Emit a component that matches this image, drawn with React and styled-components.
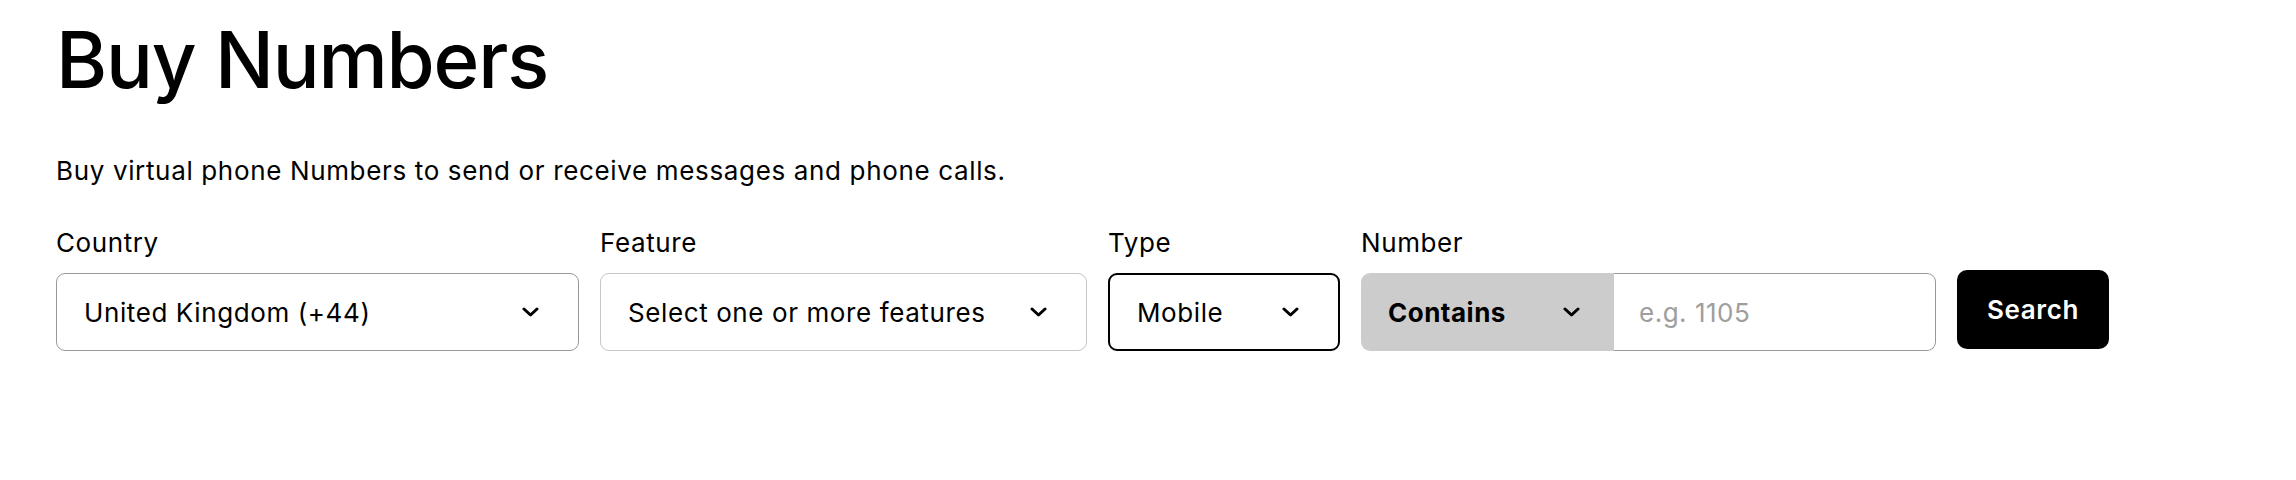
import styled, { createGlobalStyle } from "styled-components";

const GlobalStyle = createGlobalStyle`
  body {
    margin: 0;
    background: #fff;
    font-family: Inter, "Noto Sans", sans-serif;
    color: #000;
  }
`;

const Page = styled.div`
  padding: 12px 56px 0 56px;
`;

const Title = styled.h1`
  margin: 0;
  font-size: 78px;
  font-weight: 500;
  letter-spacing: -1.2px;
  line-height: 96px;
`;

const Description = styled.p`
  margin: 45px 0 0 0;
  font-size: 26px;
  letter-spacing: 0.65px;
  line-height: 36px;
`;

const Form = styled.div`
  display: flex;
  align-items: flex-end;
  gap: 21px;
  margin-top: 36px;
`;

const Field = styled.div`
  display: flex;
  flex-direction: column;
  width: ${(p) => p.width}px;
`;

const Label = styled.label`
  font-size: 26px;
  letter-spacing: 0.6px;
  line-height: 36px;
  margin-bottom: 12px;
`;

const Select = styled.div`
  box-sizing: border-box;
  height: 78px;
  display: flex;
  align-items: center;
  justify-content: space-between;
  padding: 0 39px 0 27px;
  border: ${(p) => (p.strong ? "2px solid #000" : `1.5px solid ${p.border || "#999"}`)};
  border-radius: 9px;
  font-size: 26px;
  letter-spacing: 0.6px;
  background: #fff;
`;

const Group = styled.div`
  display: flex;
  height: 78px;
`;

const Prefix = styled.div`
  box-sizing: border-box;
  width: 253px;
  display: flex;
  align-items: center;
  justify-content: space-between;
  padding: 0 34px 0 27px;
  background: #cccccc;
  border-radius: 9px 0 0 9px;
  font-size: 26px;
  font-weight: 700;
  letter-spacing: 0.5px;
`;

const Input = styled.input`
  box-sizing: border-box;
  flex: 1;
  min-width: 0;
  height: 78px;
  padding: 0 0 0 25px;
  border: 1.5px solid #999;
  border-left: none;
  border-radius: 0 9px 9px 0;
  font-family: inherit;
  font-size: 26px;
  letter-spacing: 0.5px;
  outline: none;
  &::placeholder {
    color: #9e9e9e;
  }
`;

const Button = styled.button`
  box-sizing: border-box;
  height: 79px;
  width: 152px;
  margin-bottom: 2px;
  border: none;
  border-radius: 10px;
  background: #000;
  color: #fff;
  font-family: inherit;
  font-size: 26px;
  font-weight: 600;
  letter-spacing: 0.6px;
  cursor: pointer;
`;

const Chevron = () => (
  <svg width="17" height="10" viewBox="0 0 17 10" fill="none">
    <polyline
      points="2,2 8.5,8 15,2"
      stroke="#000"
      strokeWidth="3"
      strokeLinecap="round"
      strokeLinejoin="round"
    />
  </svg>
);

export default function App() {
  return (
    <>
      <GlobalStyle />
      <Page>
        <Title>Buy Numbers</Title>
        <Description>
          Buy virtual phone Numbers to send or receive messages and phone calls.
        </Description>
        <Form>
          <Field width={523}>
            <Label>Country</Label>
            <Select>
              United Kingdom (+44)
              <Chevron />
            </Select>
          </Field>
          <Field width={487}>
            <Label>Feature</Label>
            <Select border="#c4c6cb">
              Select one or more features
              <Chevron />
            </Select>
          </Field>
          <Field width={232}>
            <Label>Type</Label>
            <Select strong>
              Mobile
              <Chevron />
            </Select>
          </Field>
          <Field width={575}>
            <Label>Number</Label>
            <Group>
              <Prefix>
                Contains
                <Chevron />
              </Prefix>
              <Input placeholder="e.g. 1105" />
            </Group>
          </Field>
          <Button>Search</Button>
        </Form>
      </Page>
    </>
  );
}
